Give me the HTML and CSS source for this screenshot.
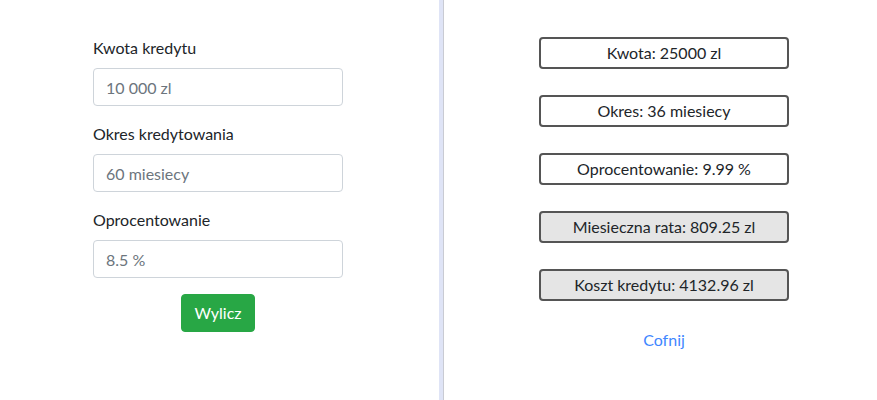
FILE: index.html
```html
<!DOCTYPE html>
<html lang="pl">
<head>
<meta charset="utf-8">
<title>Kalkulator kredytu</title>
<link rel="stylesheet" href="styles.css">
</head>
<body>
<div class="layout">
  <section class="panel panel-left">
    <form class="form">
      <div class="form-group">
        <label class="label" for="kwota">Kwota kredytu</label>
        <input class="form-control" id="kwota" type="text" placeholder="10 000 zl">
      </div>
      <div class="form-group">
        <label class="label" for="okres">Okres kredytowania</label>
        <input class="form-control" id="okres" type="text" placeholder="60 miesiecy">
      </div>
      <div class="form-group">
        <label class="label" for="opr">Oprocentowanie</label>
        <input class="form-control" id="opr" type="text" placeholder="8.5 %">
      </div>
      <div class="actions">
        <button class="btn-success" type="button">Wylicz</button>
      </div>
    </form>
  </section>
  <div class="divider"></div>
  <section class="panel panel-right">
    <div class="results">
      <div class="result">Kwota: 25000 zl</div>
      <div class="result">Okres: 36 miesiecy</div>
      <div class="result">Oprocentowanie: 9.99 %</div>
      <div class="result result-strong">Miesieczna rata: 809.25 zl</div>
      <div class="result result-strong">Koszt kredytu: 4132.96 zl</div>
      <a class="back" href="#">Cofnij</a>
    </div>
  </section>
</div>
</body>
</html>
```
FILE: styles.css
```css
* { box-sizing: border-box; }
html, body { margin: 0; padding: 0; background: #fff; }
body {
  font-family: Lato, "Noto Sans", sans-serif;
  font-size: 16px;
  line-height: 24px;
  color: #212529;
}
.layout {
  display: flex;
  height: 400px;
}
.panel-left {
  width: 439px;
  display: flex;
  justify-content: center;
  padding-top: 36px;
  padding-right: 3px;
}
.form { width: 250px; }
.form-group { margin-bottom: 16px; }
.label {
  display: block;
  margin-bottom: 8px;
}
.form-control {
  display: block;
  width: 100%;
  height: 38px;
  padding: 6px 12px;
  font: inherit;
  color: #495057;
  border: 1px solid #ced4da;
  border-radius: 4px;
  background: #fff;
}
.form-control::placeholder { color: #6c757d; opacity: 1; }
.actions { display: flex; justify-content: center; }
.btn-success {
  font: inherit;
  color: #fff;
  background: #28a745;
  border: 1px solid #28a745;
  border-radius: 4px;
  height: 38px;
  padding: 6px 12px;
  cursor: pointer;
}
.divider {
  width: 5px;
  background: #dfe4f6;
  border-right: 1px solid #c9cbd3;
}
.panel-right {
  flex: 1;
  padding-top: 37px;
  padding-left: 95px;
}
.results {
  width: 250px;
  display: flex;
  flex-direction: column;
  gap: 26px;
  align-items: center;
}
.result {
  width: 100%;
  height: 32px;
  border: 2px solid #555;
  border-radius: 4px;
  background: #fff;
  text-align: center;
  line-height: 28px;
}
.result-strong { background: #e5e5e5; }
.back {
  color: #3f87ff;
  text-decoration: none;
  margin-top: 1px;
}
```
